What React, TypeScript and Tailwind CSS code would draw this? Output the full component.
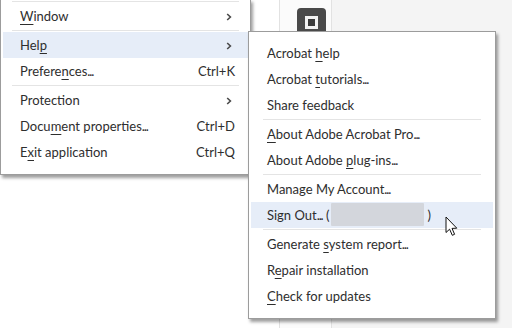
import React from "react";

const font = { fontFamily: "Lato, 'Open Sans', sans-serif" };

function U({ children }: { children: React.ReactNode }) {
  return <span className="underline underline-offset-[3px] decoration-[1px]">{children}</span>;
}

function E() {
  return <span className="tracking-[-1.1px]">...</span>;
}

function Chevron() {
  return (
    <svg width="6" height="8" viewBox="0 0 6 8" className="text-[#4a4a4a]">
      <path d="M1.2 1 L4.4 4 L1.2 7" fill="none" stroke="currentColor" strokeWidth="1.6" />
    </svg>
  );
}

function Row({
  children,
  right,
  active,
  left,
}: {
  children: React.ReactNode;
  right?: React.ReactNode;
  active?: boolean;
  left: string;
}) {
  return (
    <div
      className={
        "mx-[2px] h-[26px] flex items-center justify-between pr-[13px] pt-[2px] text-[13px] text-[#2e2e2e] " +
        left +
        (active ? " bg-[#e6edf8]" : "")
      }
    >
      <span className="whitespace-nowrap">{children}</span>
      {right}
    </div>
  );
}

function Sep({ mx }: { mx: string }) {
  return (
    <div className={"h-[3px] flex items-center " + mx}>
      <div className="h-px w-full bg-[#e4e4e4]" />
    </div>
  );
}

export default function App() {
  return (
    <div className="relative w-[512px] h-[328px] overflow-hidden flex bg-[#f4f4f4]" style={font}>
      <div className="w-[280px] h-full bg-white border-r border-[#e2e2e2]" />
      <div className="w-[52px] h-full bg-[#fbfbfb] border-r border-[#e2e2e2] pl-[17px] pt-[8px]">
        <div className="w-[29px] h-[29px] rounded-[4px] bg-[#4a4a4a] flex items-center justify-center">
          <div className="w-[13px] h-[13px] border-[3px] border-[#f2f2f2] bg-[#3a3a3a]" />
        </div>
      </div>
      <div className="flex-1 h-full" />

      {/* Main menu */}
      <div className="absolute left-0 top-[-1px] w-[251px] bg-white border border-[#9c9c9c] pb-[9px] shadow-[2px_3px_3px_rgba(0,0,0,0.38)]">
        <Sep mx="mx-[11px]" />
        <Row left="pl-[17px]" right={<span className="mr-[3px]"><Chevron /></span>}>
          <U>W</U>indow
        </Row>
        <Sep mx="mx-[11px]" />
        <Row left="pl-[17px]" active right={<span className="mr-[3px]"><Chevron /></span>}>
          Hel<U>p</U>
        </Row>
        <Row left="pl-[17px]" right={<span className="text-[13px]">Ctrl+K</span>}>
          Prefere<U>n</U>ces<E />
        </Row>
        <Sep mx="mx-[11px]" />
        <Row left="pl-[17px]" right={<span className="mr-[3px]"><Chevron /></span>}>
          Protection
        </Row>
        <Row left="pl-[17px]" right={<span className="text-[13px]">Ctrl+D</span>}>
          Docu<U>m</U>ent properties<E />
        </Row>
        <Row left="pl-[17px]" right={<span className="text-[13px]">Ctrl+Q</span>}>
          E<U>x</U>it application
        </Row>
      </div>

      {/* Submenu */}
      <div className="absolute left-[248px] top-[31px] w-[248px] bg-white border border-[#9c9c9c] pt-[8px] pb-[9px] shadow-[2px_3px_3px_rgba(0,0,0,0.38)]">
        <Row left="pl-[16px]">
          Acrobat <U>h</U>elp
        </Row>
        <Row left="pl-[16px]">
          Acrobat <U>t</U>utorials<E />
        </Row>
        <Row left="pl-[16px]">Share feedback</Row>
        <Sep mx="mx-[14px]" />
        <Row left="pl-[16px]">
          <U>A</U>bout Adobe Acrobat Pro<E />
        </Row>
        <Row left="pl-[16px]">
          About Adobe <U>p</U>lug-ins<E />
        </Row>
        <Sep mx="mx-[14px]" />
        <Row left="pl-[16px]">
          Manage My Account<E />
        </Row>
        <div className="mx-[2px] h-[26px] flex items-center pl-[16px] text-[13px] text-[#2e2e2e] bg-[#e6edf8]">
          <span className="whitespace-nowrap pt-[2px]">
            Sign Out<E /> (
          </span>
          <span className="ml-[2px] w-[93px] h-[23px] mt-[-1px] bg-[#d3d6dc] rounded-[1px] blur-[0.5px]" />
          <span className="pt-[2px] ml-[3px]">)</span>
        </div>
        <Sep mx="mx-[14px]" />
        <Row left="pl-[16px]">
          Generate <U>s</U>ystem report<E />
        </Row>
        <Row left="pl-[16px]">
          R<U>e</U>pair installation
        </Row>
        <Row left="pl-[16px]">
          <U>C</U>heck for updates
        </Row>
      </div>

      {/* Cursor */}
      <svg className="absolute left-[445px] top-[216px]" width="14" height="21" viewBox="0 0 14 21">
        <path
          d="M1 1 L1 16.5 L4.6 13.2 L7.3 19.3 L9.6 18.3 L7 12.4 L11.8 12.2 Z"
          fill="#fff"
          stroke="#111"
          strokeWidth="1"
          strokeLinejoin="round"
        />
      </svg>
    </div>
  );
}
